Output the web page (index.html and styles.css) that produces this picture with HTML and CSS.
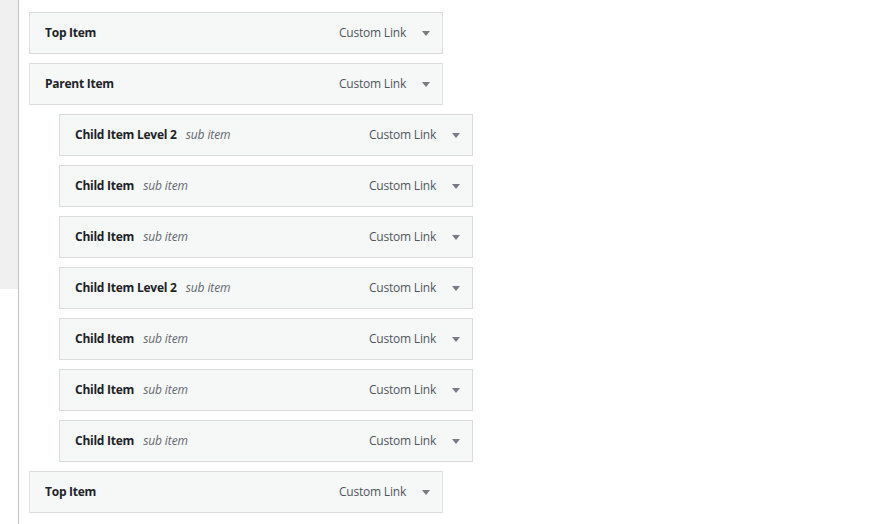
FILE: index.html
```html
<!DOCTYPE html>
<html>
<head>
<meta charset="utf-8">
<link rel="stylesheet" href="styles.css">
</head>
<body>
<div class="page">
  <div class="sidebar"><div class="sidebar-fill"></div></div>
  <ul class="menu">
    <li class="item"><span class="title">Top Item</span><span class="type">Custom Link</span><span class="toggle"></span></li>
    <li class="item"><span class="title">Parent Item</span><span class="type">Custom Link</span><span class="toggle"></span></li>
    <li class="item child"><span class="title">Child Item Level 2</span><span class="sub">sub item</span><span class="type">Custom Link</span><span class="toggle"></span></li>
    <li class="item child"><span class="title">Child Item</span><span class="sub">sub item</span><span class="type">Custom Link</span><span class="toggle"></span></li>
    <li class="item child"><span class="title">Child Item</span><span class="sub">sub item</span><span class="type">Custom Link</span><span class="toggle"></span></li>
    <li class="item child"><span class="title">Child Item Level 2</span><span class="sub">sub item</span><span class="type">Custom Link</span><span class="toggle"></span></li>
    <li class="item child"><span class="title">Child Item</span><span class="sub">sub item</span><span class="type">Custom Link</span><span class="toggle"></span></li>
    <li class="item child"><span class="title">Child Item</span><span class="sub">sub item</span><span class="type">Custom Link</span><span class="toggle"></span></li>
    <li class="item child"><span class="title">Child Item</span><span class="sub">sub item</span><span class="type">Custom Link</span><span class="toggle"></span></li>
    <li class="item"><span class="title">Top Item</span><span class="type">Custom Link</span><span class="toggle"></span></li>
  </ul>
</div>
</body>
</html>
```

FILE: styles.css
```css
html, body {
  margin: 0;
  padding: 0;
  background: #fff;
}
body {
  font-family: "Open Sans", "Noto Sans", sans-serif;
  font-size: 12px;
  color: #1d2327;
}
.page {
  display: flex;
  min-height: 524px;
  height: 524px;
  overflow: hidden;
}
.sidebar {
  width: 18px;
  flex: none;
  border-right: 1px solid #c3c4c7;
}
.sidebar-fill {
  height: 289px;
  background: #f0f0f1;
}
.menu {
  list-style: none;
  margin: 0;
  padding: 12px 0 0 10px;
}
.item {
  box-sizing: border-box;
  width: 414px;
  height: 42px;
  margin-bottom: 9px;
  display: flex;
  align-items: center;
  background: #f6f7f7;
  border: 1px solid #dcdcde;
  padding-left: 15px;
  padding-bottom: 2px;
}
.item.child {
  margin-left: 30px;
}
.title {
  font-weight: 700;
  color: #1d2327;
  letter-spacing: -0.25px;
}
.sub {
  font-style: italic;
  color: #646970;
  margin-left: 9px;
  letter-spacing: -0.1px;
}
.type {
  margin-left: auto;
  color: #50575e;
  letter-spacing: -0.2px;
}
.toggle {
  width: 36px;
  height: 20px;
  display: flex;
  align-items: center;
  justify-content: center;
  padding-top: 2px;
}
.toggle::after {
  content: "";
  border-left: 4px solid transparent;
  border-right: 4px solid transparent;
  border-top: 5px solid #787c82;
  margin-left: 3px;
}
```
